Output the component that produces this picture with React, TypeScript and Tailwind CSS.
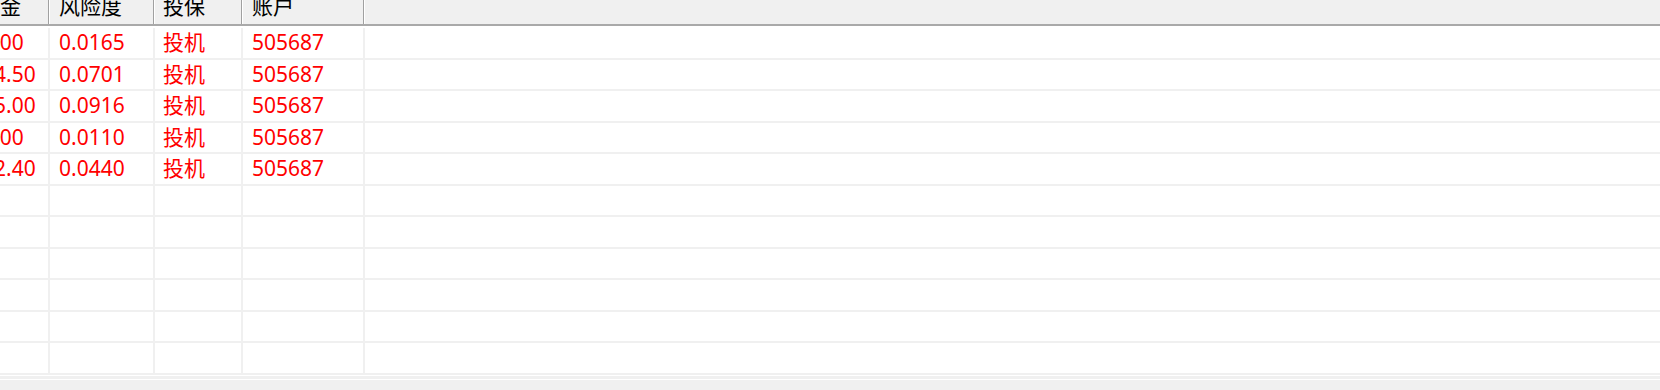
import React from "react";

const columns = [
  { width: "w-[100px]", pad: "pl-[8px]", title: "保证金" },
  { width: "w-[105px]", pad: "pl-[9px]", title: "风险度" },
  { width: "w-[88px]", pad: "pl-[8px]", title: "投保" },
  { width: "w-[122px]", pad: "pl-[9px]", title: "账户" },
];

const rows: string[][] = [
  ["832.00", "0.0165", "投机", "505687"],
  ["2854.50", "0.0701", "投机", "505687"],
  ["4715.00", "0.0916", "投机", "505687"],
  ["566.00", "0.0110", "投机", "505687"],
  ["2262.40", "0.0440", "投机", "505687"],
  ["", "", "", ""],
  ["", "", "", ""],
  ["", "", "", ""],
  ["", "", "", ""],
  ["", "", "", ""],
  ["", "", "", ""],
];

const App = () => {
  return (
    <div className="h-[390px] w-[1660px] overflow-hidden bg-white flex flex-col font-['Noto_Sans','Noto_Sans_CJK_SC',sans-serif] text-[21px]">
      {/* header, top is cut off */}
      <div className="-mt-[12px] h-[36px] shrink-0 bg-[#f0f0f0] flex -ml-[50px]">
        {columns.map((col) => (
          <div key={col.title} className={`${col.width} h-full flex shrink-0`}>
            <div className={`flex-1 flex items-center pt-[2px] ${col.pad} text-black whitespace-nowrap overflow-hidden`}>
              {col.title}
            </div>
            <div className="w-px h-full bg-[#a0a0a0]" />
            <div className="w-px h-full bg-white" />
          </div>
        ))}
        <div className="flex-1" />
      </div>
      <div className="h-[2px] shrink-0 bg-[#a9a9a9]" />
      <div className="h-[2px] shrink-0 bg-white" />

      {/* body */}
      <div className="flex flex-col shrink-0">
        {rows.map((row, i) => (
          <div key={i} className="h-[31.5px] flex -ml-[50px] border-b-2 border-[#f0f0f0]">
            {columns.map((col, j) => (
              <div
                key={j}
                className={`${col.width} ${col.pad} h-full shrink-0 flex items-center border-r-2 border-[#f0f0f0] text-[#ff0000] whitespace-nowrap overflow-hidden`}
              >
                {row[j]}
              </div>
            ))}
            <div className="flex-1" />
          </div>
        ))}
      </div>

      {/* horizontal scrollbar edge */}
      <div className="h-px shrink-0 bg-white" />
      <div className="h-[3px] shrink-0 bg-[#f0f0f0]" />
      <div className="h-px shrink-0 bg-white" />
      <div className="flex-1 bg-[#f0f0f0]" />
    </div>
  );
};

export default App;
